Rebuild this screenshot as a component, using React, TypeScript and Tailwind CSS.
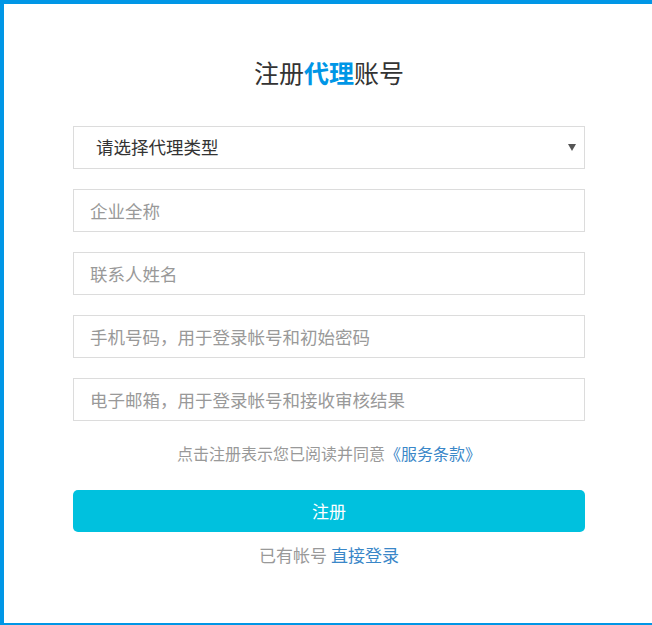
import React from "react";

const font = { fontFamily: '"Noto Sans CJK SC", "Noto Sans", sans-serif' };

function Field({ placeholder }: { placeholder: string }) {
  return (
    <input
      type="text"
      placeholder={placeholder}
      className="block w-full h-[43px] border border-[#dcdcdc] bg-white px-[16px] text-[17.5px] text-[#333] placeholder:text-[#999] outline-none"
      style={font}
    />
  );
}

export default function App() {
  return (
    <div
      className="w-[652px] h-[625px] bg-white border-t-4 border-l-4 border-b-2 border-[#0096e6] box-border"
      style={font}
    >
      <div className="pt-[52px] pl-[2px] flex flex-col items-center">
        <h1 className="h-8 leading-8 text-[25px] text-[#333] font-normal">
          注册<span className="text-[#0096e6] font-bold">代理</span>账号
        </h1>
        <div className="w-[512px] mt-[38px] flex flex-col gap-[20px]">
          <div className="relative h-[43px] border border-[#dcdcdc] bg-white flex items-center pl-[22px] text-[17.5px] text-[#333]">
            请选择代理类型
            <svg
              className="absolute right-[8px] top-[17px]"
              width="8"
              height="7"
              viewBox="0 0 8 7"
            >
              <path d="M0 0 H8 L4 7 Z" fill="#555" />
            </svg>
          </div>
          <Field placeholder="企业全称" />
          <Field placeholder="联系人姓名" />
          <Field placeholder="手机号码，用于登录帐号和初始密码" />
          <Field placeholder="电子邮箱，用于登录帐号和接收审核结果" />
        </div>
        <p className="mt-[20px] h-6 leading-6 text-[16px] text-[#999]">
          点击注册表示您已阅读并同意<span className="text-[#3a87c8]">《服务条款》</span>
        </p>
        <button className="mt-[25px] w-[512px] h-[42px] rounded-[5px] bg-[#00c1de] text-white text-[17px]">
          注册
        </button>
        <p className="mt-[11px] h-6 leading-6 text-[17px] text-[#999]">
          已有帐号 <span className="text-[#3a87c8]">直接登录</span>
        </p>
      </div>
    </div>
  );
}
